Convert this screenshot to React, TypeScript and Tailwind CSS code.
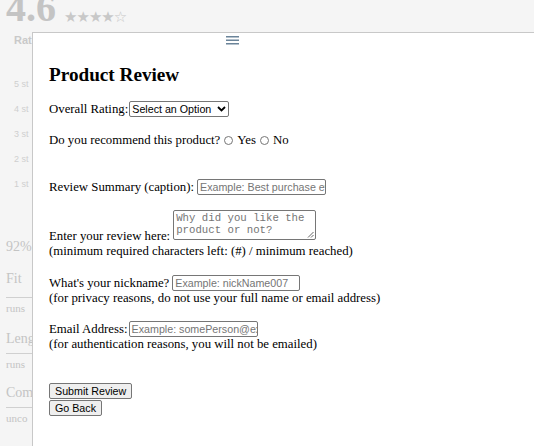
import React from 'react';

const serif = { fontFamily: '"Liberation Serif", "Times New Roman", serif' };

const Hamburger = () => (
    <svg width="13" height="9" viewBox="0 0 13 9" className="block">
        <rect x="0" y="0" width="13" height="1.5" fill="#6b8499" />
        <rect x="0" y="3.5" width="13" height="1.5" fill="#6b8499" />
        <rect x="0" y="7" width="13" height="1.5" fill="#6b8499" />
    </svg>
);

const Chevron = () => (
    <svg width="9" height="6" viewBox="0 0 9 6" className="shrink-0">
        <path d="M1 1l3.5 3.5L8 1" fill="none" stroke="#000" strokeWidth="1.8" />
    </svg>
);

const Radio = () => <span className="inline-block w-[9px] h-[9px] rounded-full border border-[#767676] bg-white mx-[4px] align-[-1px]" />;

const fieldBase = "border border-[#767676] rounded-[2px] h-[16px] px-[2px] text-[10.7px] font-['Liberation_Sans',Arial,sans-serif] leading-[14px] overflow-hidden whitespace-nowrap";
const inputCls = fieldBase + " inline-block align-middle text-[#757575]";

const btnCls = "block border border-[#767676] rounded-[2px] bg-[#efefef] h-[16px] px-[5px] text-[10.7px] leading-[14px] text-black font-['Liberation_Sans',Arial,sans-serif]";

const Background = () => (
    <div className="absolute inset-0 bg-[#f5f5f5] text-[#c4c4c4] overflow-hidden">
        <div className="flex items-end gap-[8px] pl-[6px] -mt-[12px]" style={serif}>
            <span className="text-[40px] font-bold leading-[40px]">4.6</span>
            <span className="text-[15px] leading-[20px] mb-[1px] font-['DejaVu_Sans',sans-serif] text-[#c8c8c8] tracking-[-1px]">★★★★☆</span>
        </div>
        <div className="pl-[14px] mt-[4px] text-[11px] font-bold font-['Liberation_Sans',Arial,sans-serif] text-[#c9c9c9]">Rat</div>
        <div className="pl-[14px] mt-[29px] flex flex-col gap-[12px] text-[9px] leading-[13px] font-['Liberation_Sans',Arial,sans-serif] text-[#cfcfcf]">
            <span>5 st</span><span>4 st</span><span>3 st</span><span>2 st</span><span>1 st</span>
        </div>
        <div className="pl-[6px] mt-[48px] text-[14px] text-[#c4c4c4]" style={serif}>
            <div className="leading-[16px]">92%</div>
            <div className="leading-[16px] mt-[16px]">Fit</div>
            <div className="border-t border-[#d0d0d0] w-[30px] mt-[10px]"></div>
            <div className="text-[11px] leading-[14px] mt-[3px]">runs</div>
            <div className="leading-[16px] mt-[16px]">Leng</div>
            <div className="border-t border-[#d0d0d0] w-[30px] mt-[6px]"></div>
            <div className="text-[11px] leading-[14px] mt-[3px]">runs</div>
            <div className="leading-[16px] mt-[14px]">Com</div>
            <div className="border-t border-[#d0d0d0] w-[30px] mt-[6px]"></div>
            <div className="text-[11px] leading-[14px] mt-[3px]">unco</div>
        </div>
    </div>
);

export default function App() {
    return (
        <div className="relative w-[534px] h-[446px] overflow-hidden">
            <Background />
            <div className="absolute left-[32px] top-[32px] right-0 bottom-0 bg-white border-l border-t border-[#c8c8c8] text-black text-[12.8px] leading-[15px]" style={serif}>
                <div className="pl-[193px] pt-[3px]"><Hamburger /></div>
                <div className="pl-[16px]">
                    <h2 className="text-[19.2px] font-bold leading-[22px] mt-[19px]">Product Review</h2>
                    <div className="mt-[15px] flex items-center h-[16px]">
                        <span>Overall Rating:</span>
                        <span className={fieldBase + " flex items-center justify-between text-black w-[100px] ml-[1px]"}>
                            <span>Select an Option</span><Chevron />
                        </span>
                    </div>
                    <div className="mt-[15px] flex items-center h-[16px]">
                        <span>Do you recommend this product?</span>
                        <Radio /><span>Yes</span><Radio /><span>No</span>
                    </div>
                    <div className="mt-[31px] flex items-center h-[16px]">
                        <span>Review Summary (caption):</span>
                        <span className={inputCls + " w-[129px] ml-[3px]"}>Example: Best purchase ever</span>
                    </div>
                    <div className="mt-[15px] flex items-end">
                        <span className="leading-[15px]">Enter your review here:</span>
                        <span className="relative ml-[3px] w-[143px] h-[30px] border border-[#767676] rounded-[2px] px-[2px] pt-[1px] text-[10.7px] leading-[12px] text-[#757575] font-['Liberation_Mono','Courier_New',monospace] mb-[4px]">
                            Why did you like the product or not?
                            <svg width="7" height="7" viewBox="0 0 7 7" className="absolute right-[1px] bottom-[1px]">
                                <path d="M6.5 1L1 6.5M6.5 4L4 6.5" stroke="#555" strokeWidth="0.9" />
                            </svg>
                        </span>
                    </div>
                    <div>(minimum required characters left: (#) / minimum reached)</div>
                    <div className="mt-[16px] flex items-center h-[16px]">
                        <span>What's your nickname?</span>
                        <span className={inputCls + " w-[128px] ml-[3px]"}>Example: nickName007</span>
                    </div>
                    <div>(for privacy reasons, do not use your full name or email address)</div>
                    <div className="mt-[15px] flex items-center h-[16px]">
                        <span>Email Address:</span>
                        <span className={inputCls + " w-[129px] ml-[1px]"}>Example: somePerson@example.com</span>
                    </div>
                    <div>(for authentication reasons, you will not be emailed)</div>
                    <div className="mt-[31px]">
                        <button className={btnCls}>Submit Review</button>
                        <button className={btnCls + " mt-[1px]"}>Go Back</button>
                    </div>
                </div>
            </div>
        </div>
    );
}
